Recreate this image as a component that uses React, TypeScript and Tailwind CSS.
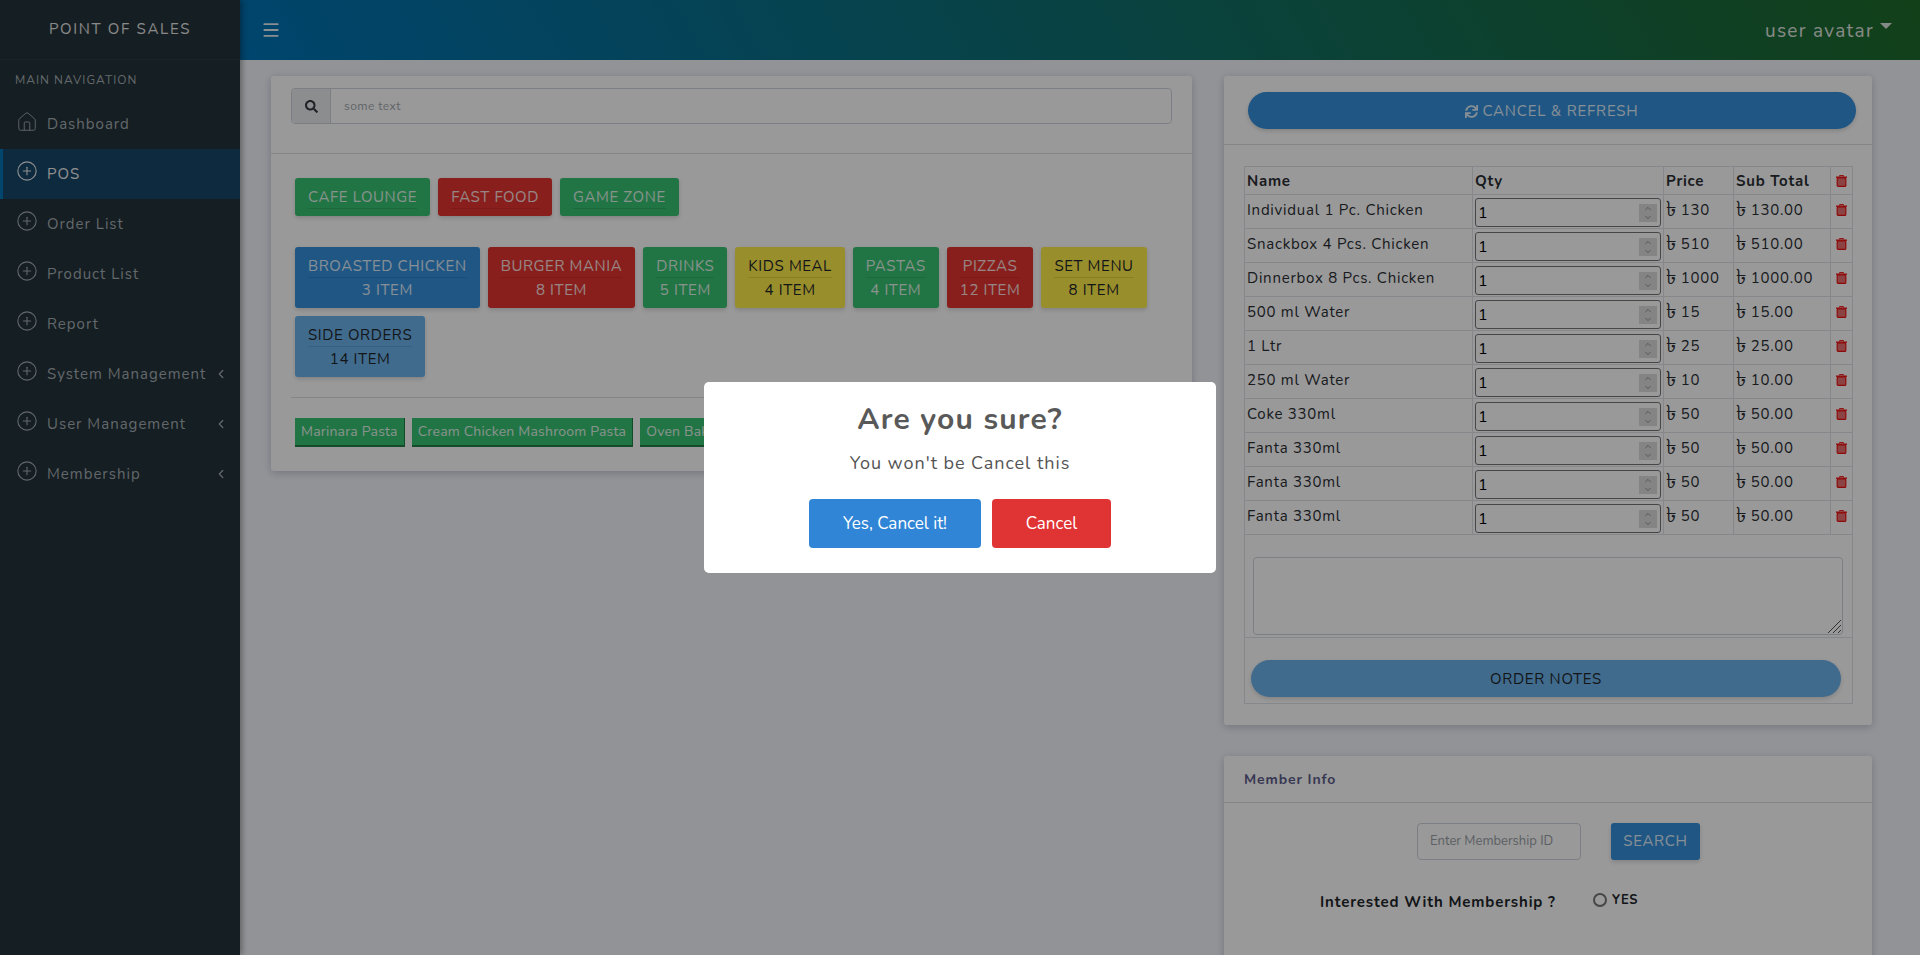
import { Menu, House, CirclePlus, ChevronLeft, ChevronUp, ChevronDown } from "lucide-react";
import { FaSearch, FaSync } from "react-icons/fa";

const font = "font-['Nunito','Noto_Sans',sans-serif]";

const navItems = [
  { label: "Dashboard", home: true },
  { label: "POS", active: true },
  { label: "Order List" },
  { label: "Product List" },
  { label: "Report" },
  { label: "System Management", sub: true },
  { label: "User Management", sub: true },
  { label: "Membership", sub: true },
];

const cartRows = [
  ["Individual 1 Pc. Chicken", "130"],
  ["Snackbox 4 Pcs. Chicken", "510"],
  ["Dinnerbox 8 Pcs. Chicken", "1000"],
  ["500 ml Water", "15"],
  ["1 Ltr", "25"],
  ["250 ml Water", "10"],
  ["Coke 330ml", "50"],
  ["Fanta 330ml", "50"],
  ["Fanta 330ml", "50"],
  ["Fanta 330ml", "50"],
];

const colors = {
  green: "bg-[#38c172] text-white/85",
  red: "bg-[#e3342f] text-white/85",
  blue: "bg-[#3490dc] text-white/85",
  yellow: "bg-[#ffed4a] text-[#212529]",
  sky: "bg-[#6cb2eb] text-[#212529]",
};

const groups: [string, keyof typeof colors][] = [
  ["CAFE LOUNGE", "green"],
  ["FAST FOOD", "red"],
  ["GAME ZONE", "green"],
];

const categories: [string, string, keyof typeof colors][] = [
  ["BROASTED CHICKEN", "3 ITEM", "blue"],
  ["BURGER MANIA", "8 ITEM", "red"],
  ["DRINKS", "5 ITEM", "green"],
  ["KIDS MEAL", "4 ITEM", "yellow"],
  ["PASTAS", "4 ITEM", "green"],
  ["PIZZAS", "12 ITEM", "red"],
  ["SET MENU", "8 ITEM", "yellow"],
  ["SIDE ORDERS", "14 ITEM", "sky"],
];

function Trash() {
  return (
    <svg width="11" height="12" viewBox="0 0 11 12" className="mx-auto block">
      <path d="M3.5 1.5V.6h4v.9" fill="none" stroke="#f01010" strokeWidth="1" />
      <rect x="0" y="1.5" width="11" height="1.4" fill="#f01010" />
      <rect x="1.2" y="3" width="8.6" height="8.4" rx="1" fill="#e87070" stroke="#f01010" strokeWidth="1.2" />
    </svg>
  );
}

function Sidebar() {
  return (
    <aside className="w-[240px] shrink-0 bg-[#243339] shadow-[2px_0_6px_rgba(0,0,0,0.35)] z-10">
      <div className="h-[60px] flex items-center justify-center border-b border-[#2e3d44] text-[15px] tracking-[1.7px] text-[#e4e4e4]">
        POINT OF SALES
      </div>
      <div className="h-[39px] flex items-center pl-[15px] text-[12px] tracking-[1px] text-[#a4adb3]">MAIN NAVIGATION</div>
      {navItems.map((item) => (
        <div
          key={item.label}
          className={`h-[50px] flex items-center pr-[12px] text-[15px] tracking-[1px] ${
            item.active ? "bg-[#174668] text-[#f0f0f0] border-l-[3px] border-[#0073b7] pl-[13px]" : "pl-[16px] text-[#a4adb3]"
          }`}
        >
          {item.home ? (
            <House size={22} strokeWidth={1} className="-mt-1 shrink-0" />
          ) : (
            <CirclePlus size={22} strokeWidth={1.2} className="-mt-1.5 shrink-0" />
          )}
          <span className="ml-[9px] flex-1 whitespace-nowrap">{item.label}</span>
          {item.sub && <ChevronLeft size={14} strokeWidth={2.2} className="shrink-0" />}
        </div>
      ))}
    </aside>
  );
}

function Topbar() {
  return (
    <header className="h-[60px] shrink-0 flex items-center justify-between pl-[21px] pr-[28px] bg-linear-[60deg] from-[#0073b7] to-[#1e6b2a] text-white">
      <Menu size={20} strokeWidth={2.2} className="text-[#e8eef2]" />
      <div className="flex items-center pt-[2px] text-[19px] tracking-[1.3px] text-[#e0e6e0]">
        user avatar
        <span className="ml-[6px] mb-[10px] border-x-[6px] border-t-[6px] border-x-transparent border-t-[#e0e6e0]" />
      </div>
    </header>
  );
}

function ProductPanel() {
  return (
    <section className="w-[921px] h-[395px] shrink-0 bg-white rounded-[3px] shadow-[0_2px_8px_rgba(60,60,110,0.28)]">
      <div className="h-[78px] px-[20px] pt-[12px] border-b border-[#dcdfe3]">
        <div className="h-[36px] flex border border-[#ced4da] rounded">
          <div className="w-[39px] flex items-center justify-center bg-[#e9ecef] border-r border-[#ced4da] rounded-l">
            <FaSearch size={13} className="text-[#343a40]" />
          </div>
          <div className="flex-1 flex items-center pl-[13px] text-[12px] tracking-[0.4px] text-[#a3a8ae] bg-white rounded-r">some text</div>
        </div>
      </div>
      <div className="px-[20px] pt-[24px]">
        <div className="flex gap-[8px] pl-[4px]">
          {groups.map(([name, c]) => (
            <button key={name} className={`h-[38px] px-[13px] pt-[7px] rounded-[3px] text-[15px] tracking-[0.62px] flex flex-col shadow-[0_2px_4px_rgba(0,0,0,0.15)] ${colors[c]}`}>
              <span className="block h-[24px] border-b border-black/10 leading-[25px]">{name}</span>
            </button>
          ))}
        </div>
        <div className="flex flex-wrap gap-[8px] pl-[4px] mt-[31px]">
          {categories.map(([name, count, c]) => (
            <button key={name} className={`h-[61px] px-[13px] pt-[7px] rounded-[3px] text-[15px] tracking-[0.62px] flex flex-col shadow-[0_2px_4px_rgba(0,0,0,0.15)] ${colors[c]}`}>
              <span className="block w-full h-[24px] border-b border-black/10 leading-[25px]">{name}</span>
              <span className="block w-full leading-[25px]">{count}</span>
            </button>
          ))}
        </div>
        <div className="border-t border-[#dcdfe3] mt-[20px]" />
        <div className="flex gap-[7px] pl-[4px] mt-[20px] overflow-hidden">
          {["Marinara Pasta", "Cream Chicken Mashroom Pasta", "Oven Baked Pasta"].map((name) => (
            <button key={name} className="h-[29px] px-[6px] bg-[#38c172] border-b-2 border-r border-[#227f47] text-white/85 text-[14px] tracking-[0.2px] whitespace-nowrap">
              {name}
            </button>
          ))}
        </div>
      </div>
    </section>
  );
}

function QtyInput() {
  return (
    <div className="h-[29px] flex items-center justify-between pl-[2px] pr-[3px] border border-[#767676] rounded-[3px] bg-white text-[16px] text-black">
      1
      <span className="w-[18px] h-[18px] bg-[#dcdcdc] flex flex-col items-center justify-center text-[#777]">
        <ChevronUp size={10} strokeWidth={2} />
        <ChevronDown size={10} strokeWidth={2} />
      </span>
    </div>
  );
}

function Taka() {
  return <span className="inline-block w-[10px] text-[21px] leading-[0] align-[-1px]">৳</span>;
}

function CartPanel() {
  const cell = "border border-[#dee2e6] px-[2px]";
  return (
    <section className="w-[648px] bg-white rounded-[3px] shadow-[0_2px_8px_rgba(60,60,110,0.28)]">
      <div className="h-[69px] px-[24px] pt-[16px] border-b border-[#dcdfe3]">
        <button className="w-[608px] h-[37px] pt-[1px] rounded-full bg-[#3490dc] text-white/85 text-[15px] tracking-[0.8px] flex items-center justify-center gap-[4px] shadow-[0_2px_4px_rgba(0,0,0,0.15)]">
          <FaSync size={13} />
          CANCEL &amp; REFRESH
        </button>
      </div>
      <div className="px-[20px] pt-[21px] pb-[21px]">
        <table className="w-[608px] table-fixed border-collapse text-[15px] tracking-[0.75px] text-[#2a2e33]">
          <colgroup>
            <col className="w-[228px]" />
            <col className="w-[191px]" />
            <col className="w-[70px]" />
            <col className="w-[97px]" />
            <col className="w-[22px]" />
          </colgroup>
          <thead>
            <tr className="h-[28px] font-bold">
              <td className={`${cell} align-middle pt-[2px]`}>Name</td>
              <td className={`${cell} align-middle pt-[2px]`}>Qty</td>
              <td className={`${cell} align-middle pt-[2px]`}>Price</td>
              <td className={`${cell} align-middle pt-[2px]`}>Sub Total</td>
              <td className={`${cell} align-middle`}>
                <Trash />
              </td>
            </tr>
          </thead>
          <tbody>
            {cartRows.map(([name, price], i) => (
              <tr key={i} className="h-[34px]">
                <td className={`${cell} align-top pt-[4px] whitespace-nowrap`}>{name}</td>
                <td className={`${cell} align-top pt-[3px]`}>
                  <QtyInput />
                </td>
                <td className={`${cell} align-top pt-[4px] whitespace-nowrap`}>
                  <Taka /> {price}
                </td>
                <td className={`${cell} align-top pt-[4px] whitespace-nowrap`}>
                  <Taka /> {price}.00
                </td>
                <td className={`${cell} align-top pt-[9px]`}>
                  <Trash />
                </td>
              </tr>
            ))}
            <tr className="h-[103px]">
              <td colSpan={5} className="border border-[#dee2e6] px-[8px] pt-[22px] pb-[2px]">
                <div className="relative w-[590px] h-[78px]">
                  <textarea className="block w-full h-full resize-none border border-[#ced4da] rounded bg-white" />
                  <svg width="15" height="15" viewBox="0 0 15 15" className="absolute right-[1px] bottom-[1px]" stroke="#555" strokeWidth="1">
                    <path d="M1 14 14 1M6 14 14 6M11 14 14 11" />
                  </svg>
                </div>
              </td>
            </tr>
            <tr className="h-[66px]">
              <td colSpan={5} className="border border-[#dee2e6] pl-[6px] pt-[22px] align-top">
                <button className="block w-[590px] h-[37px] pt-[2px] rounded-full bg-[#6cb2eb] text-[#212529] text-[15px] tracking-[0.7px] shadow-[0_2px_4px_rgba(0,0,0,0.15)]">
                  ORDER NOTES
                </button>
              </td>
            </tr>
          </tbody>
        </table>
      </div>
    </section>
  );
}

function MemberPanel() {
  return (
    <section className="w-[648px] h-[300px] mt-[31px] bg-white rounded-[3px] shadow-[0_2px_8px_rgba(60,60,110,0.28)]">
      <div className="h-[47px] flex items-center px-[20px] border-b border-[#dcdfe3] text-[14px] font-bold tracking-[0.9px] text-[#5d5d8a]">
        Member Info
      </div>
      <div className="flex gap-[30px] pl-[193px] mt-[20px]">
        <div className="w-[164px] h-[37px] flex items-center pl-[12px] border border-[#ced4da] rounded text-[13px] text-[#9aa0a6] whitespace-nowrap">
          Enter Membership ID
        </div>
        <button className="w-[89px] h-[37px] rounded-[3px] bg-[#3490dc] text-white/85 text-[15px] tracking-[0.7px] shadow-[0_2px_4px_rgba(0,0,0,0.15)]">SEARCH</button>
      </div>
      <div className="flex items-start pl-[96px] mt-[32px] text-[15px] font-bold tracking-[0.85px] text-[#212529]">
        <span className="w-[273px] -mt-[1px]">Interested With Membership ?</span>
        <span className="w-[14px] h-[14px] mt-[1px] rounded-full border-2 border-[#767676] bg-white" />
        <span className="ml-[5px] text-[13px] tracking-[0.6px] leading-[16px]">YES</span>
      </div>
    </section>
  );
}

function ConfirmDialog() {
  return (
    <div className="fixed inset-0 z-20 bg-black/40 flex items-start justify-center pt-[382px]">
      <div className="w-[512px] h-[191px] bg-white rounded-[5px] flex flex-col items-center pt-[18px]">
        <h2 className="text-[30px] leading-[40px] font-bold tracking-[1.2px] text-[#595959]">Are you sure?</h2>
        <p className="mt-[10px] text-[18px] leading-[27px] tracking-[0.95px] text-[#545454]">You won't be Cancel this</p>
        <div className="mt-[22px] flex gap-[11px]">
          <button className="w-[172px] h-[49px] rounded-[4px] bg-[#3085d6] text-white text-[17px]">Yes, Cancel it!</button>
          <button className="w-[119px] h-[49px] rounded-[4px] bg-[#e03333] text-white text-[17px]">Cancel</button>
        </div>
      </div>
    </div>
  );
}

export default function App() {
  return (
    <div className={`${font} flex h-screen overflow-hidden bg-[#f4f6fb]`}>
      <Sidebar />
      <div className="flex-1 flex flex-col min-w-0">
        <Topbar />
        <main className="flex pt-[16px] pl-[31px] gap-[32px]">
          <ProductPanel />
          <div>
            <CartPanel />
            <MemberPanel />
          </div>
        </main>
      </div>
      <ConfirmDialog />
    </div>
  );
}
